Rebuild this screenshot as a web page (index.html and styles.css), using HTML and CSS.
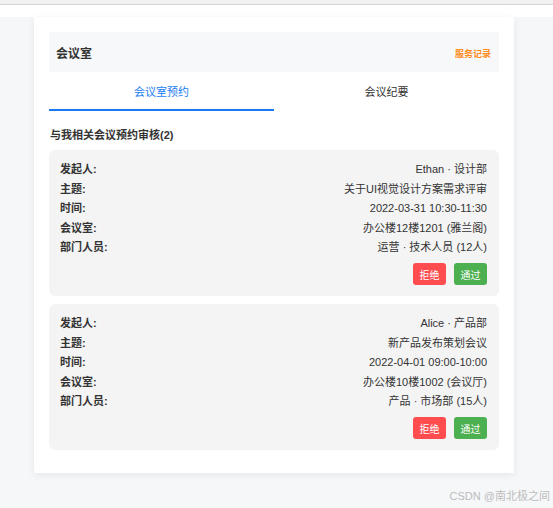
FILE: index.html
```html
<!DOCTYPE html>
<html lang="zh">
<head>
<meta charset="utf-8">
<title>会议室</title>
<link rel="stylesheet" href="styles.css">
</head>
<body>
<div class="topbar"></div>
<div class="band"></div>
<main class="panel">
  <div class="head">
    <span class="head-title">会议室</span>
    <a class="head-link">服务记录</a>
  </div>
  <div class="tabs">
    <div class="tab active">会议室预约</div>
    <div class="tab">会议纪要</div>
  </div>
  <h2 class="section-title">与我相关会议预约审核(2)</h2>
  <div class="item">
    <div class="row"><span class="label">发起人:</span><span class="value">Ethan · 设计部</span></div>
    <div class="row"><span class="label">主题:</span><span class="value">关于UI视觉设计方案需求评审</span></div>
    <div class="row"><span class="label">时间:</span><span class="value">2022-03-31 10:30-11:30</span></div>
    <div class="row"><span class="label">会议室:</span><span class="value">办公楼12楼1201 (雅兰阁)</span></div>
    <div class="row"><span class="label">部门人员:</span><span class="value">运营 · 技术人员 (12人)</span></div>
    <div class="actions">
      <button class="btn reject">拒绝</button>
      <button class="btn pass">通过</button>
    </div>
  </div>
  <div class="item">
    <div class="row"><span class="label">发起人:</span><span class="value">Alice · 产品部</span></div>
    <div class="row"><span class="label">主题:</span><span class="value">新产品发布策划会议</span></div>
    <div class="row"><span class="label">时间:</span><span class="value">2022-04-01 09:00-10:00</span></div>
    <div class="row"><span class="label">会议室:</span><span class="value">办公楼10楼1002 (会议厅)</span></div>
    <div class="row"><span class="label">部门人员:</span><span class="value">产品 · 市场部 (15人)</span></div>
    <div class="actions">
      <button class="btn reject">拒绝</button>
      <button class="btn pass">通过</button>
    </div>
  </div>
</main>
<div class="watermark">CSDN @南北极之间</div>
</body>
</html>
```

FILE: styles.css
```css
* { box-sizing: border-box; }
html, body {
  margin: 0;
  padding: 0;
  background: #f6f7f9;
  font-family: "Liberation Sans", Arial, "Noto Sans CJK SC", sans-serif;
  color: #333;
}
.topbar {
  height: 5px;
  background: #f1f1f1;
  border-bottom: 1px solid #d4d4d4;
}
.band {
  height: 12px;
  background: #fff;
}
.panel {
  margin-left: 34px;
  width: 480px;
  background: #fff;
  padding: 15px 15px 23px;
  box-shadow: 0 2px 8px rgba(0, 0, 0, 0.07);
}
.head {
  height: 40px;
  background: #f7f8fa;
  display: flex;
  align-items: center;
  justify-content: space-between;
  padding: 0 8px 0 7px;
}
.head-title {
  font-size: 12px;
  font-weight: bold;
  color: #333;
}
.head-link {
  font-size: 9px;
  font-weight: bold;
  color: #ff8c1a;
  padding-top: 2px;
}
.tabs {
  display: flex;
  height: 39px;
}
.tab {
  flex: 1;
  display: flex;
  align-items: center;
  justify-content: center;
  font-size: 11px;
  color: #333;
  padding-top: 1px;
  border-bottom: 2px solid transparent;
}
.tab.active {
  color: #1a7cf5;
  border-bottom-color: #1a7cf5;
}
.section-title {
  margin: 16px 0 7px 1px;
  font-size: 11px;
  line-height: 16px;
  font-weight: bold;
  color: #333;
}
.item {
  background: #f4f4f4;
  border-radius: 6px;
  padding: 10px 12px 11px 11px;
  margin-bottom: 8px;
}
.item:last-child { margin-bottom: 0; }
.row {
  display: flex;
  justify-content: space-between;
  font-size: 11px;
  line-height: 19.5px;
}
.label {
  font-weight: bold;
  color: #333;
}
.value {
  color: #333;
}
.actions {
  display: flex;
  justify-content: flex-end;
  gap: 8px;
  margin-top: 5.5px;
}
.btn {
  width: 33px;
  height: 22px;
  border: none;
  border-radius: 3px;
  color: #fff;
  font-family: inherit;
  font-size: 10px;
  padding: 0;
}
.reject { background: #ff4d4f; }
.pass { background: #4caf50; }
.watermark {
  text-align: right;
  font-size: 11px;
  line-height: 14px;
  color: #bcbcbc;
  margin-top: 16px;
  padding-right: 3px;
}
```
